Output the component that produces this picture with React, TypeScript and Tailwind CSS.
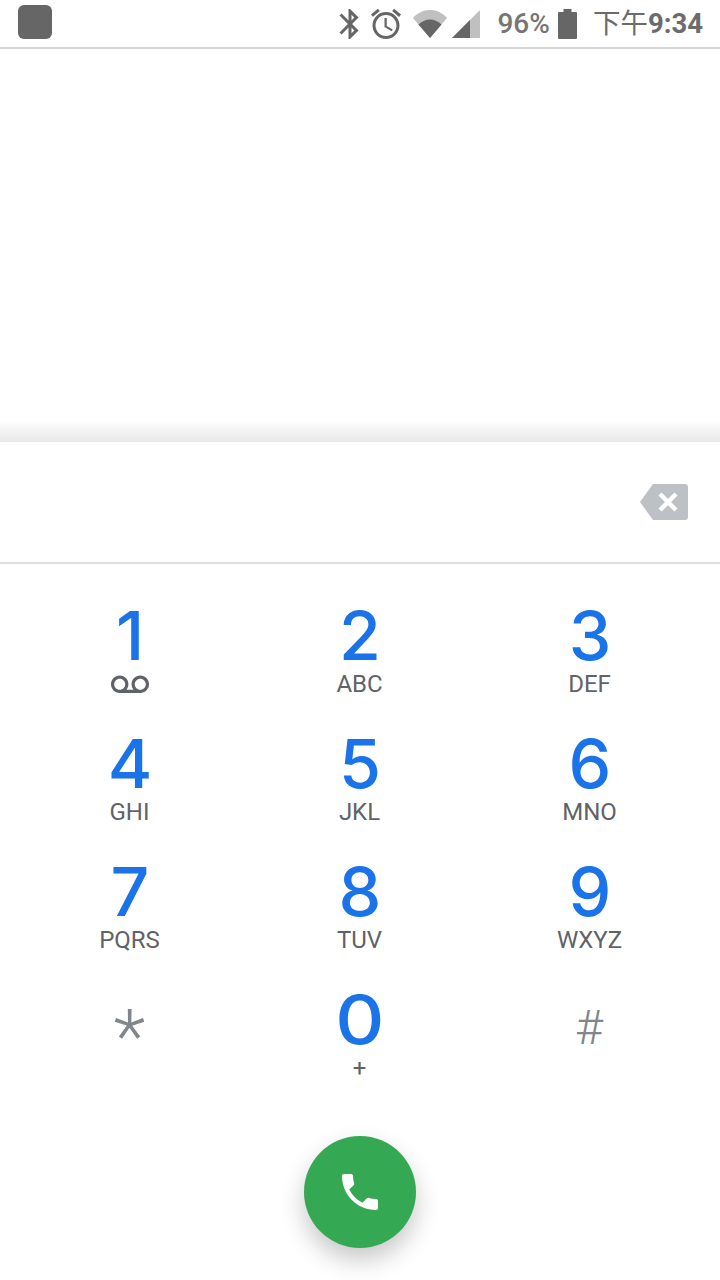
const keys = [
  [["1", "vm"], ["2", "ABC"], ["3", "DEF"]],
  [["4", "GHI"], ["5", "JKL"], ["6", "MNO"]],
  [["7", "PQRS"], ["8", "TUV"], ["9", "WXYZ"]],
];

function Voicemail() {
  return (
    <svg width="38" height="38" viewBox="0 0 24 24" fill="#5f6368" className="mt-[-4px]">
      <path d="M18.5 6C15.46 6 13 8.46 13 11.5c0 1.33.47 2.55 1.26 3.5H9.74c.79-.95 1.26-2.17 1.26-3.5C11 8.46 8.54 6 5.5 6S0 8.46 0 11.5 2.46 17 5.5 17h13c3.04 0 5.5-2.46 5.5-5.5S21.54 6 18.5 6zm-13 9C3.57 15 2 13.43 2 11.5S3.57 8 5.5 8 9 9.57 9 11.5 7.43 15 5.5 15zm13 0c-1.93 0-3.5-1.57-3.5-3.5S16.57 8 18.5 8 22 9.57 22 11.5 20.43 15 18.5 15z" />
    </svg>
  );
}

function Key({ d, l }: { d: string; l: string }) {
  return (
    <div className="flex flex-col items-center h-[128px]">
      <div className="mt-[6px] h-[70px] leading-[70px] text-[68px] font-[450] text-[#1a73e8] font-['Inter',sans-serif]">{d}</div>
      <div className="h-[28px] leading-[28px] text-[24px] text-[#5f6368] pr-[1px]">
        {l === "vm" ? <Voicemail /> : l}
      </div>
    </div>
  );
}

export default function App() {
  return (
    <div className="w-[720px] h-[1280px] bg-white flex flex-col overflow-hidden font-['Roboto',sans-serif]">
      <div className="h-[49px] border-b-2 border-[#d4d4d4] pl-[18px] pr-[17px] flex items-center text-[#6b6b6b] shrink-0">
        <div className="w-[34px] h-[34px] rounded-[6px] bg-[#666666] mt-[-3px]" />
        <div className="ml-auto flex items-center h-full mt-[1px]">
          <svg width="36" height="36" viewBox="0 0 24 24" fill="#666666">
            <path d="M17.71 7.71L12 2h-1v7.59L6.41 5 5 6.41 10.59 12 5 17.59 6.41 19 11 14.41V22h1l5.71-5.71-4.3-4.29 4.3-4.29zM13 5.83l1.88 1.88L13 9.59V5.83zm1.88 10.46L13 18.17v-3.76l1.88 1.88z" />
          </svg>
          <svg width="36" height="36" viewBox="0 0 24 24" fill="#666666">
            <path d="M22 5.72l-4.6-3.86-1.29 1.53 4.6 3.86L22 5.72zM7.88 3.39L6.6 1.86 2 5.71l1.29 1.53 4.59-3.85zM12.5 8H11v6l4.75 2.85.75-1.23-4-2.37V8zM12 4c-4.97 0-9 4.03-9 9s4.03 9 9 9 9-4.03 9-9-4.03-9-9-9zm0 16c-3.87 0-7-3.13-7-7s3.13-7 7-7 7 3.13 7 7-3.13 7-7 7z" />
          </svg>
          <svg width="36" height="30" viewBox="0 0 36 30" className="ml-[8px]">
            <path d="M18 29L1 9C5 4.5 11 1 18 1s13 3.5 17 8z" fill="#c0c0c0" />
            <path d="M18 29L6.5 15.5C9.5 12.5 13.500 10.500 18 10.500s8.500 2 11.500 5z" fill="#666666" />
          </svg>
          <svg width="30" height="30" viewBox="0 0 30 30" className="ml-[3px]">
            <path d="M29 1v28H1z" fill="#c0c0c0" />
            <path d="M19 11v18H1z" fill="#666666" />
          </svg>
          <span className="ml-[16px] text-[28px] font-medium text-[#757575] leading-none">96%</span>
          <svg width="19" height="30" viewBox="0 0 19 30" className="ml-[8px]">
            <path d="M5.500 0h8v3h4.500a1 1 0 0 1 1 1v25a1 1 0 0 1-1 1H1a1 1 0 0 1-1-1V4a1 1 0 0 1 1-1h4.500z" fill="#666666" />
          </svg>
          <span className="ml-[16px] text-[27.5px] text-[#6b6b6b] leading-none font-['Roboto','Noto_Sans_CJK_SC',sans-serif]">
            下午<span className="font-bold">9:34</span>
          </span>
        </div>
      </div>

      <div className="h-[393px] shrink-0 flex flex-col justify-end">
        <div className="h-[22px] bg-gradient-to-b from-white to-[#e8e8e8]" />
      </div>

      <div className="h-[122px] shrink-0 border-b-2 border-[#dfdfdf] flex items-center justify-end pr-[32px]">
        <svg width="48" height="36" viewBox="0 0 48 36">
          <path d="M13 0h32a3 3 0 0 1 3 3v30a3 3 0 0 1-3 3H13L0 18z" fill="#bdc1c6" />
          <path d="M20 10l16 16M36 10L20 26" stroke="#ffffff" strokeWidth="4.500" fill="none" />
        </svg>
      </div>

      <div className="px-[15px] pt-[30px] grid grid-cols-3">
        {keys.flat().map(([d, l]) => (
          <Key key={d} d={d} l={l} />
        ))}
        <div className="flex justify-center h-[128px] text-[#80868b] text-[74px] leading-[82px] font-light pt-[18px] pr-[1px]">*</div>
        <div className="flex flex-col items-center h-[128px]">
          <div className="mt-[6px] h-[70px] leading-[70px] text-[68px] font-[450] text-[#1a73e8] font-['Inter',sans-serif] scale-x-[1.12]">0</div>
          <div className="h-[28px] leading-[28px] text-[24px] text-[#5f6368] pr-[1px]">+</div>
        </div>
        <div className="flex justify-center h-[128px] text-[#80868b] text-[48px] leading-[82px] font-light pt-[9px] pr-[2px]">#</div>
      </div>

      <div className="flex justify-center mt-[30px]">
        <div className="w-[112px] h-[112px] rounded-full bg-[#34a853] flex items-center justify-center shadow-[0_12px_24px_rgba(0,0,0,0.22)]">
          <svg width="48" height="48" viewBox="0 0 24 24" fill="#ffffff">
            <path d="M6.620 10.790c1.440 2.830 3.760 5.140 6.590 6.590l2.200-2.200c.27-.27.67-.36 1.020-.24 1.120.37 2.330.57 3.570.57.55 0 1 .45 1 1V20c0 .55-.45 1-1 1-9.390 0-17-7.610-17-17 0-.55.45-1 1-1h3.500c.55 0 1 .45 1 1 0 1.250.2 2.450.57 3.570.11.35.03.74-.25 1.020l-2.200 2.200z" />
          </svg>
        </div>
      </div>
    </div>
  );
}
